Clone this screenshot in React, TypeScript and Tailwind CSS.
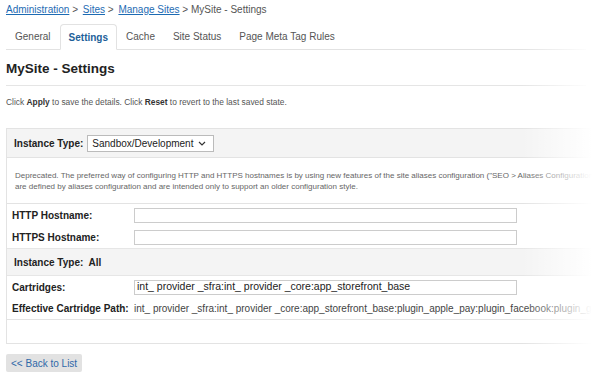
export default function App() {
  const tabs = ['General', 'Settings', 'Cache', 'Site Status', 'Page Meta Tag Rules'];

  return (
    <div className="relative w-[592px] h-[380px] overflow-hidden bg-white font-['Liberation_Sans',Arial,sans-serif] text-[#333]">
      {/* breadcrumb */}
      <div className="pl-[6px] pt-[4px] h-[19px] text-[10px] leading-[12px] text-[#555]">
        <a href="#" className="text-[#1d6bb3] underline">Administration</a>
        <span> &gt; </span>
        <a href="#" className="ml-[2px] text-[#1d6bb3] underline">Sites</a>
        <span> &gt; </span>
        <a href="#" className="ml-[2px] text-[#1d6bb3] underline">Manage Sites</a>
        <span> &gt; MySite - Settings</span>
      </div>

      {/* tabs */}
      <div className="mx-[6px] mt-[5px] flex h-[26px] border-b border-[#e2e2e2] text-[10px]">
        {tabs.map((t) => (
          <div
            key={t}
            className={
              t === 'Settings'
                ? '-mb-px flex items-center rounded-t-[4px] border border-b-white border-[#e2e2e2] bg-white px-[8px] font-bold text-[#1d5f99]'
                : 'flex items-center px-[9px] text-[#555]'
            }
          >
            {t}
          </div>
        ))}
      </div>

      {/* heading */}
      <div className="mx-[6px] border-b border-[#e5e5e5] pt-[10px] pb-[8px] text-[13.5px] leading-[17px] font-bold text-[#222]">
        MySite - Settings
      </div>

      <div className="mx-[6px] pt-[11px] text-[8.4px] leading-[10px] text-[#555]">
        Click <b className="text-[#333]">Apply</b> to save the details. Click{' '}
        <b className="text-[#333]">Reset</b> to revert to the last saved state.
      </div>

      {/* settings box */}
      <div className="ml-[6px] mt-[21px] w-[640px] border border-[#e3e3e3]">
        <div className="flex h-[29px] items-center gap-[4px] border-b border-[#e3e3e3] bg-[#f4f4f4] pl-[7px]">
          <span className="text-[10px] font-bold text-[#222]">Instance Type:</span>
          <div className="flex h-[17px] w-[127px] items-center justify-between border border-[#bbb] bg-white pl-[4px] pr-[7px] text-[10px] text-[#222]">
            <span>Sandbox/Development</span>
            <svg width="8" height="5" viewBox="0 0 8 5" fill="none" stroke="#333" strokeWidth="1.2">
              <path d="M1 1l3 3 3-3" />
            </svg>
          </div>
        </div>

        <div className="border-b border-[#e3e3e3] pt-[12px] pb-[11px] pl-[8px] text-[8px] leading-[11px] text-[#666]">
          <div className="whitespace-nowrap">
            Deprecated. The preferred way of configuring HTTP and HTTPS hostnames is by using new features of the site aliases configuration ("SEO &gt; Aliases Configuration"). Hostnames
          </div>
          <div className="whitespace-nowrap">
            are defined by aliases configuration and are intended only to support an older configuration style.
          </div>
        </div>

        <div className="flex h-[22px] items-center pl-[5px]">
          <span className="w-[122px] text-[10px] font-bold text-[#222]">HTTP Hostname:</span>
          <div className="h-[15px] w-[383px] border border-[#ccc] bg-white" />
        </div>
        <div className="flex h-[22px] items-center pl-[5px]">
          <span className="w-[122px] text-[10px] font-bold text-[#222]">HTTPS Hostname:</span>
          <div className="h-[15px] w-[383px] border border-[#ccc] bg-white" />
        </div>

        <div className="flex h-[28px] items-center border-y border-[#e6e6e6] bg-[#f4f4f4] pl-[7px] text-[10px] font-bold text-[#222]">
          Instance Type:&nbsp; All
        </div>

        <div className="flex h-[22px] items-center pl-[5px]">
          <span className="w-[122px] text-[10px] font-bold text-[#222]">Cartridges:</span>
          <div className="flex h-[15px] w-[383px] items-center border border-[#ccc] bg-white pl-[2px] text-[10.5px] text-[#222] whitespace-nowrap">
            int_ provider _sfra:int_ provider _core:app_storefront_base
          </div>
        </div>
        <div className="flex h-[22px] items-center border-b border-[#e3e3e3] pl-[5px]">
          <span className="w-[122px] shrink-0 text-[10px] font-bold text-[#222] whitespace-nowrap">Effective Cartridge Path:</span>
          <span className="whitespace-nowrap text-[10px] text-[#444]">
            int_ provider _sfra:int_ provider _core:app_storefront_base:plugin_apple_pay:plugin_facebook:plugin_giftregistry
          </span>
        </div>
        <div className="h-[23px]" />
      </div>

      <button className="ml-[6px] mt-[10px] h-[18px] rounded-[2px] bg-[#e2e2e2] px-[5px] text-[10px] text-[#2f68a8]">
        &lt;&lt; Back to List
      </button>

      {/* right side fade */}
      <div className="pointer-events-none absolute right-0 top-0 h-full w-[70px] bg-gradient-to-r from-white/0 to-white" />
    </div>
  );
}
